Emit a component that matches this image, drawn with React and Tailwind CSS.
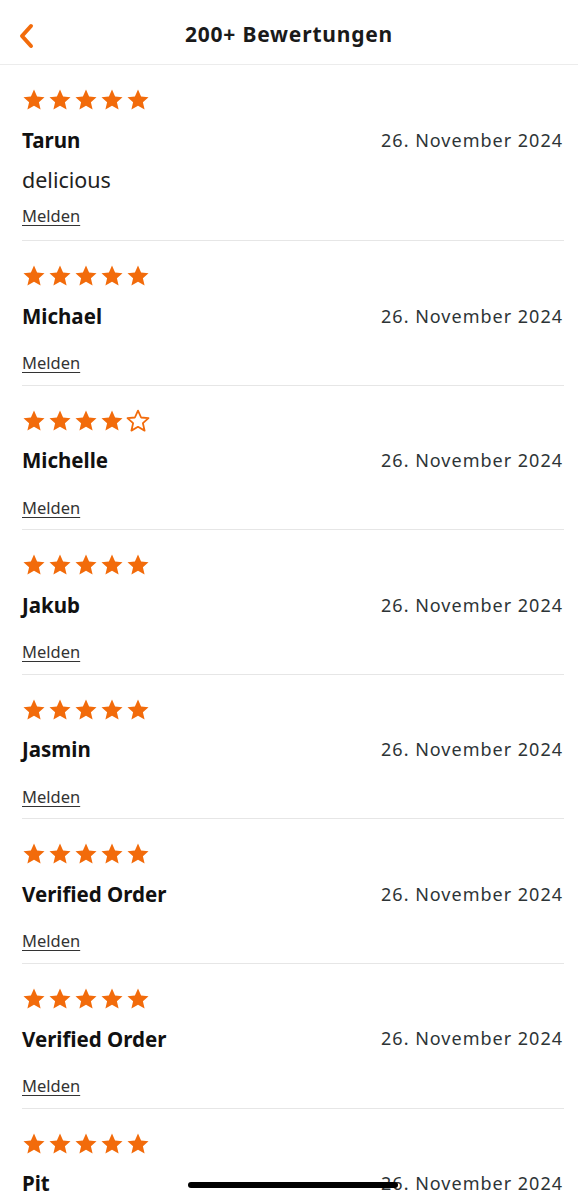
import React from "react";

const reviews = [
  { name: "Tarun", rating: 5, comment: "delicious" },
  { name: "Michael", rating: 5 },
  { name: "Michelle", rating: 4 },
  { name: "Jakub", rating: 5 },
  { name: "Jasmin", rating: 5 },
  { name: "Verified Order", rating: 5 },
  { name: "Verified Order", rating: 5 },
  { name: "Pit", rating: 5 },
];

const Star = ({ filled }) => (
  <svg width="24" height="24" viewBox="0 0 24 24">
    <path
      d="M12 1.6l3.1 6.9 7.4.7-5.6 5 1.7 7.4L12 17.8l-6.6 3.8 1.7-7.4-5.6-5 7.4-.7z"
      fill={filled ? "#f26b0b" : "none"}
      stroke="#f26b0b"
      strokeWidth={filled ? 0 : 1.8}
      strokeLinejoin="round"
    />
  </svg>
);

const Report = ({ className }) => (
  <a className={`block text-[16.5px] leading-[20px] text-[#333] underline underline-offset-[3px] ${className}`}>
    Melden
  </a>
);

const ReviewItem = ({ review }) => (
  <div className={`pt-[23px] border-b border-[#e6e6e6] ${review.comment ? "pb-[14px]" : "pb-[11.6px]"}`}>
    <div className="flex gap-[2px]">
      {[1, 2, 3, 4, 5].map((i) => (
        <Star key={i} filled={i <= review.rating} />
      ))}
    </div>
    <div className="mt-[14px] flex items-center justify-between h-[28px]">
      <span className="text-[20.5px] font-bold text-[#111]">{review.name}</span>
      <span className="text-[18px] text-[#2d3436] tracking-[1px] pr-[1px]">
        26. November 2024
      </span>
    </div>
    {review.comment ? (
      <>
        <p className="mt-[12px] text-[21.5px] leading-[28px] text-[#222]">{review.comment}</p>
        <Report className="mt-[12px]" />
      </>
    ) : (
      <Report className="mt-[23px]" />
    )}
  </div>
);

const App = () => {
  return (
    <div
      className="relative w-[578px] h-[1200px] overflow-hidden bg-white"
      style={{ fontFamily: '"Noto Sans", Inter, sans-serif' }}
    >
      {/* Header */}
      <header className="relative h-[65px] pt-[6px] flex items-center justify-center border-b border-[#ececec]">
        <button className="absolute left-[14px] top-[20px] p-[2px]">
          <svg width="22" height="28" viewBox="0 0 22 28">
            <path
              d="M15 4L6 14l9 10"
              fill="none"
              stroke="#f26b0b"
              strokeWidth="4"
              strokeLinecap="round"
              strokeLinejoin="round"
            />
          </svg>
        </button>
        <h1 className="text-[21px] font-bold text-[#1a1a1a] tracking-[0.8px]">200+ Bewertungen</h1>
      </header>

      {/* Reviews */}
      <main className="pl-[22px] pr-[14px]">
        {reviews.map((r, i) => (
          <ReviewItem key={i} review={r} />
        ))}
      </main>

      {/* Home indicator */}
      <div className="absolute bottom-[12px] left-[188px] w-[210px] h-[6px] rounded-full bg-black" />
    </div>
  );
};

export default App;
